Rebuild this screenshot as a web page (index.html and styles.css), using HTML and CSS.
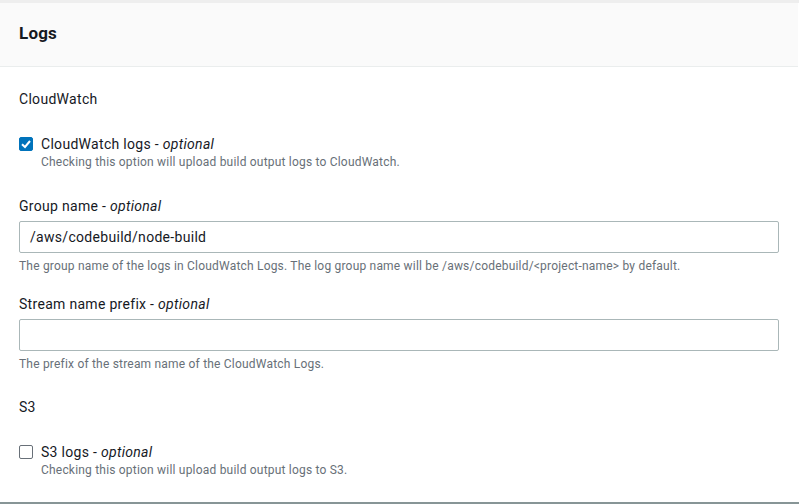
FILE: index.html
```html
<!DOCTYPE html>
<html>
<head>
<meta charset="utf-8">
<link rel="stylesheet" href="styles.css">
</head>
<body>
<div class="panel">
  <div class="panel-header"><h2 class="title">Logs</h2></div>
  <div class="panel-body">
    <div class="section-title">CloudWatch</div>
    <label class="check">
      <span class="box checked"><svg viewBox="0 0 14 14" width="14" height="14"><path d="M3 7.2 L6 10 L11 4" fill="none" stroke="#fff" stroke-width="2"/></svg></span>
      <span class="check-text">
        <span class="check-label">CloudWatch logs - <i>optional</i></span>
        <span class="desc">Checking this option will upload build output logs to CloudWatch.</span>
      </span>
    </label>
    <div class="field first">
      <div class="field-label">Group name - <i>optional</i></div>
      <div class="input">/aws/codebuild/node-build</div>
      <div class="desc">The group name of the logs in CloudWatch Logs. The log group name will be /aws/codebuild/&lt;project-name&gt; by default.</div>
    </div>
    <div class="field">
      <div class="field-label">Stream name prefix - <i>optional</i></div>
      <div class="input"></div>
      <div class="desc">The prefix of the stream name of the CloudWatch Logs.</div>
    </div>
    <div class="section-title s3">S3</div>
    <label class="check">
      <span class="box"></span>
      <span class="check-text">
        <span class="check-label">S3 logs - <i>optional</i></span>
        <span class="desc">Checking this option will upload build output logs to S3.</span>
      </span>
    </label>
  </div>
</div>
</body>
</html>
```
FILE: styles.css
```css
* { box-sizing: border-box; }
html, body { margin: 0; padding: 0; background: #fff; }
body {
  font-family: Roboto, "Liberation Sans", sans-serif;
  color: #16191f;
  width: 799px;
  height: 504px;
  overflow: hidden;
  letter-spacing: 0.2px;
}
.panel {
  border-top: 3px solid #eeeeee;
  border-bottom: 2px solid #879596;
  height: 504px;
}
.panel-header {
  background: #fafafa;
  border-bottom: 1px solid #eaeded;
  height: 64px;
  padding: 0 19px;
  display: flex;
  align-items: center;
  margin-right: 1px;
}
.title {
  margin: 0;
  font-size: 17px;
  font-weight: 700;
  line-height: 22px;
  margin-top: -4px;
}
.panel-body {
  padding: 22px 20px 0 19px;
}
.section-title {
  font-size: 14px;
  line-height: 20px;
}
.section-title.s3 { margin-top: 25px; }
.check {
  display: flex;
  gap: 8px;
  margin-top: 25px;
}
.box {
  width: 14px;
  height: 14px;
  border: 1px solid #687078;
  border-radius: 2px;
  margin-top: 3px;
  flex: none;
  display: flex;
}
.box.checked {
  background: #0073bb;
  border-color: #0073bb;
}
.box.checked svg { margin: -1px; }
.check-text { display: flex; flex-direction: column; }
.check-label { font-size: 14px; line-height: 20px; letter-spacing: 0.3px; }
.field-label, .section-title, .input { letter-spacing: 0.3px; }
.desc {
  font-size: 12px;
  line-height: 16px;
  color: #687078;
}
.field { margin-top: 20px; }
.field.first { margin-top: 26px; }
.field-label {
  font-size: 14px;
  line-height: 20px;
  margin-bottom: 5px;
}
.input {
  height: 32px;
  border: 1px solid #aab7b8;
  border-radius: 2px;
  font-size: 14px;
  line-height: 30px;
  padding: 0 10px;
  margin-bottom: 5px;
}
```
